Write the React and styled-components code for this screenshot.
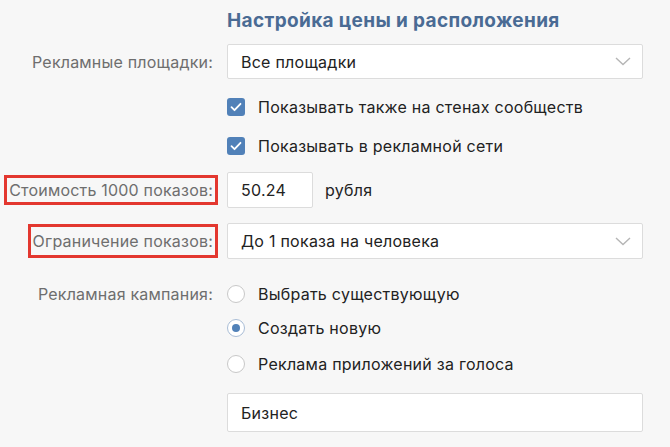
import React from "react";
import styled, { createGlobalStyle } from "styled-components";

const Global = createGlobalStyle`
  html, body { margin: 0; padding: 0; background: #f7f7f7; }
  body { font-family: Inter, "Liberation Sans", Arial, sans-serif; }
`;

const Page = styled.div`
  width: 670px;
  height: 447px;
  box-sizing: border-box;
  padding: 10px 27px 0 0;
  background: #f7f7f7;
  overflow: hidden;
`;

const Row = styled.div`
  display: grid;
  grid-template-columns: 213px 416px;
  column-gap: 14px;
  align-items: center;
  margin-top: ${(p) => p.$gap || 0}px;
`;

const Title = styled.h2`
  grid-column: 2;
  margin: 0;
  font-size: 19px;
  line-height: 22px;
  font-weight: 700;
  letter-spacing: 0.35px;
  color: #4a6b94;
`;

const Label = styled.div`
  justify-self: end;
  font-size: 16px;
  line-height: 20px;
  letter-spacing: 0.2px;
  color: #6e6e6e;
  white-space: nowrap;
  ${(p) =>
    p.$marked &&
    `
    border: 3px solid #e3372f;
    padding: ${p.$marked}px 2px ${p.$marked}px 2px;
    margin-right: -5px;
  `}
`;

const Field = styled.div`
  box-sizing: border-box;
  height: ${(p) => p.$h || 35}px;
  width: ${(p) => (p.$w ? p.$w + "px" : "100%")};
  background: #fff;
  border: 1px solid #dcdcdc;
  border-radius: 2px;
  display: flex;
  align-items: center;
  justify-content: space-between;
  padding: 0 11px 0 13px;
  font-size: 16px;
  letter-spacing: 0.25px;
  color: #222;
`;

const Inline = styled.div`
  display: flex;
  align-items: center;
  gap: 12px;
  font-size: 16px;
  letter-spacing: 0.25px;
  color: #222;
`;

const Option = styled.label`
  display: flex;
  align-items: center;
  gap: 13px;
  height: 20px;
  font-size: 16px;
  letter-spacing: 0.25px;
  color: #222;
`;

const Box = styled.span`
  width: 18px;
  height: 18px;
  border-radius: 3px;
  background: #5181b8;
  display: flex;
  align-items: center;
  justify-content: center;
  flex: none;
`;

const Radio = styled.span`
  box-sizing: border-box;
  width: 18px;
  height: 18px;
  border-radius: 50%;
  background: #fff;
  border: 1px solid ${(p) => (p.$on ? "#a9bdd6" : "#c8c8c8")};
  display: flex;
  align-items: center;
  justify-content: center;
  flex: none;
  &::after {
    content: "";
    width: 8px;
    height: 8px;
    border-radius: 50%;
    background: ${(p) => (p.$on ? "#5181b8" : "transparent")};
  }
`;

const Chevron = () => (
  <svg width="16" height="9" viewBox="0 0 16 9" fill="none">
    <path d="M1 1l7 6.5L15 1" stroke="#b5b5b5" strokeWidth="1.4" />
  </svg>
);

const Check = () => (
  <svg width="12" height="10" viewBox="0 0 12 10" fill="none">
    <path d="M1.5 5.2l3 3L10.5 1.8" stroke="#fff" strokeWidth="1.8" strokeLinecap="round" strokeLinejoin="round" />
  </svg>
);

export default function App() {
  return (
    <>
      <Global />
      <Page>
        <Row>
          <Title>Настройка цены и расположения</Title>
        </Row>
        <Row $gap={12}>
          <Label>Рекламные площадки:</Label>
          <Field>
            <span>Все площадки</span>
            <Chevron />
          </Field>
        </Row>
        <Row $gap={18}>
          <span />
          <Option>
            <Box><Check /></Box>
            Показывать также на стенах сообществ
          </Option>
        </Row>
        <Row $gap={19}>
          <span />
          <Option>
            <Box><Check /></Box>
            Показывать в рекламной сети
          </Option>
        </Row>
        <Row $gap={16}>
          <Label $marked={2}>Стоимость 1000 показов:</Label>
          <Inline>
            <Field $w={86} $h={36}>50.24</Field>
            <span>рубля</span>
          </Inline>
        </Row>
        <Row $gap={15}>
          <Label $marked={4}>Ограничение показов:</Label>
          <Field $h={36}>
            <span>До 1 показа на человека</span>
            <Chevron />
          </Field>
        </Row>
        <Row $gap={25}>
          <Label>Рекламная кампания:</Label>
          <Option>
            <Radio />
            Выбрать существующую
          </Option>
        </Row>
        <Row $gap={14}>
          <span />
          <Option>
            <Radio $on />
            Создать новую
          </Option>
        </Row>
        <Row $gap={16}>
          <span />
          <Option>
            <Radio />
            Реклама приложений за голоса
          </Option>
        </Row>
        <Row $gap={19}>
          <span />
          <Field $h={39}>Бизнес</Field>
        </Row>
      </Page>
    </>
  );
}
